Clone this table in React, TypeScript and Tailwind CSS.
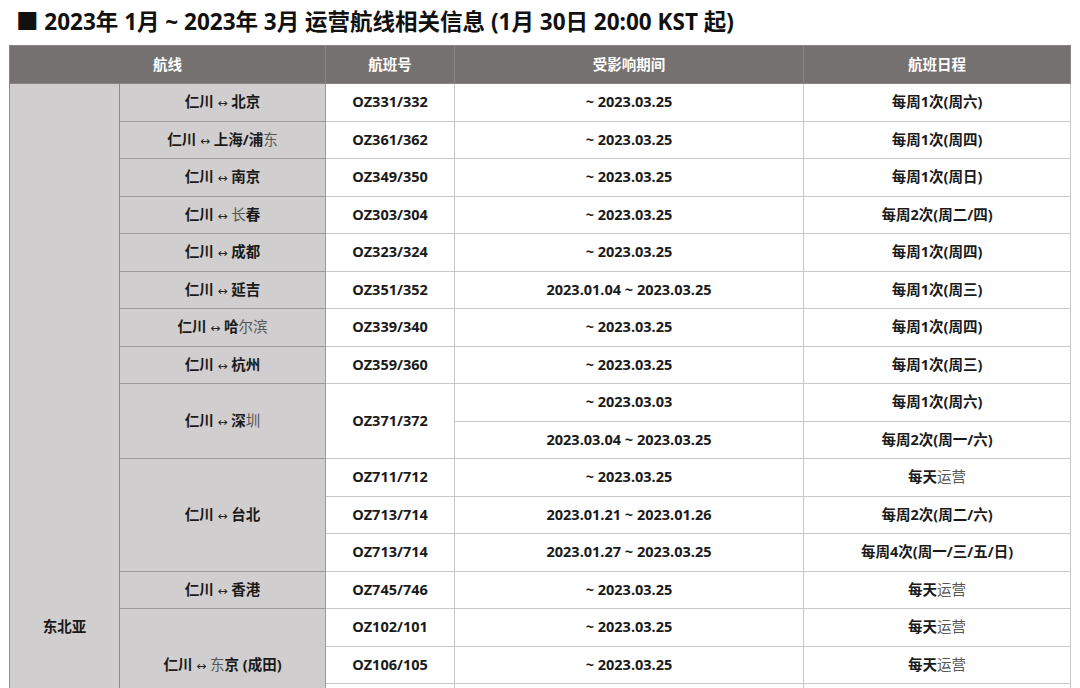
import React from 'react';

type Part = string | { light: string } | { arrow: true };

type Row = {
  route?: { parts: Part[]; span: number };
  flight?: { no: string; span: number };
  period: string;
  schedule: Part[];
};

const light = (s: string) => ({ light: s });
const arrow: Part = { arrow: true };
const daily: Part[] = ['每天', light('运营')];

const rows: Row[] = [
  { route: { parts: ['仁川 ', arrow, ' 北京'], span: 1 }, flight: { no: 'OZ331/332', span: 1 }, period: '~ 2023.03.25', schedule: ['每周1次(周六)'] },
  { route: { parts: ['仁川 ', arrow, ' 上海/浦', light('东')], span: 1 }, flight: { no: 'OZ361/362', span: 1 }, period: '~ 2023.03.25', schedule: ['每周1次(周四)'] },
  { route: { parts: ['仁川 ', arrow, ' 南京'], span: 1 }, flight: { no: 'OZ349/350', span: 1 }, period: '~ 2023.03.25', schedule: ['每周1次(周日)'] },
  { route: { parts: ['仁川 ', arrow, ' ', light('长'), '春'], span: 1 }, flight: { no: 'OZ303/304', span: 1 }, period: '~ 2023.03.25', schedule: ['每周2次(周二/四)'] },
  { route: { parts: ['仁川 ', arrow, ' 成都'], span: 1 }, flight: { no: 'OZ323/324', span: 1 }, period: '~ 2023.03.25', schedule: ['每周1次(周四)'] },
  { route: { parts: ['仁川 ', arrow, ' 延吉'], span: 1 }, flight: { no: 'OZ351/352', span: 1 }, period: '2023.01.04 ~ 2023.03.25', schedule: ['每周1次(周三)'] },
  { route: { parts: ['仁川 ', arrow, ' 哈', light('尔滨')], span: 1 }, flight: { no: 'OZ339/340', span: 1 }, period: '~ 2023.03.25', schedule: ['每周1次(周四)'] },
  { route: { parts: ['仁川 ', arrow, ' 杭州'], span: 1 }, flight: { no: 'OZ359/360', span: 1 }, period: '~ 2023.03.25', schedule: ['每周1次(周三)'] },
  { route: { parts: ['仁川 ', arrow, ' 深', light('圳')], span: 2 }, flight: { no: 'OZ371/372', span: 2 }, period: '~ 2023.03.03', schedule: ['每周1次(周六)'] },
  { period: '2023.03.04 ~ 2023.03.25', schedule: ['每周2次(周一/六)'] },
  { route: { parts: ['仁川 ', arrow, ' 台北'], span: 3 }, flight: { no: 'OZ711/712', span: 1 }, period: '~ 2023.03.25', schedule: daily },
  { flight: { no: 'OZ713/714', span: 1 }, period: '2023.01.21 ~ 2023.01.26', schedule: ['每周2次(周二/六)'] },
  { flight: { no: 'OZ713/714', span: 1 }, period: '2023.01.27 ~ 2023.03.25', schedule: ['每周4次(周一/三/五/日)'] },
  { route: { parts: ['仁川 ', arrow, ' 香港'], span: 1 }, flight: { no: 'OZ745/746', span: 1 }, period: '~ 2023.03.25', schedule: daily },
  { route: { parts: ['仁川 ', arrow, ' ', light('东'), '京 (成田)'], span: 3 }, flight: { no: 'OZ102/101', span: 1 }, period: '~ 2023.03.25', schedule: daily },
  { flight: { no: 'OZ106/105', span: 1 }, period: '~ 2023.03.25', schedule: daily },
  { flight: { no: 'OZ108/107', span: 1 }, period: '~ 2023.03.25', schedule: daily },
  { route: { parts: ['仁川 ', arrow, ' ', light('东'), '京 (羽田)'], span: 2 }, flight: { no: 'OZ1085/1065', span: 1 }, period: '~ 2023.03.25', schedule: daily },
  { flight: { no: 'OZ1035/1045', span: 1 }, period: '~ 2023.03.25', schedule: daily },
  { route: { parts: ['仁川 ', arrow, ' 大阪'], span: 3 }, flight: { no: 'OZ112/111', span: 1 }, period: '~ 2023.03.25', schedule: daily },
  { flight: { no: 'OZ114/113', span: 1 }, period: '~ 2023.03.25', schedule: daily },
  { flight: { no: 'OZ116/115', span: 1 }, period: '~ 2023.03.25', schedule: daily },
  { route: { parts: ['仁川 ', arrow, ' 名古屋'], span: 2 }, flight: { no: 'OZ122/121', span: 1 }, period: '~ 2023.03.25', schedule: daily },
  { flight: { no: 'OZ124/123', span: 1 }, period: '~ 2023.03.25', schedule: ['每周3次(周二/四/六)'] },
  { route: { parts: ['仁川 ', arrow, ' 福冈'], span: 2 }, flight: { no: 'OZ132/131', span: 1 }, period: '~ 2023.03.25', schedule: daily },
  { flight: { no: 'OZ134/133', span: 1 }, period: '~ 2023.03.25', schedule: daily },
  { route: { parts: ['仁川 ', arrow, ' 札幌'], span: 1 }, flight: { no: 'OZ174/173', span: 1 }, period: '~ 2023.03.25', schedule: daily },
  { route: { parts: ['仁川 ', arrow, ' 冲绳'], span: 1 }, flight: { no: 'OZ172/171', span: 1 }, period: '~ 2023.03.25', schedule: ['每周3次(周三/五/日)'] },
  { route: { parts: ['仁川 ', arrow, ' 乌兰巴托'], span: 1 }, flight: { no: 'OZ567/568', span: 1 }, period: '~ 2023.03.25', schedule: ['每周2次(周二/五)'] },
];

const Text: React.FC<{ parts: Part[] }> = ({ parts }) => (
  <>
    {parts.map((p, i) => {
      if (typeof p === 'string') return <span key={i}>{p}</span>;
      if ('arrow' in p)
        return (
          <span key={i} className="font-normal text-[12px] text-[#222]" style={{ fontFamily: '"DejaVu Sans", sans-serif' }}>
            ↔
          </span>
        );
      return (
        <span key={i} className="font-normal text-[#555]">
          {p.light}
        </span>
      );
    })}
  </>
);

export default function App() {
  return (
    <div
      className="h-[688px] overflow-hidden bg-white text-[#1a1a1a]"
      style={{ fontFamily: '"Open Sans", "Noto Sans CJK SC", sans-serif' }}
    >
      {/* Title */}
      <h1 className="pl-[16px] pt-[4px] h-[45px] text-[22.5px] font-bold leading-[36px] text-[#111]">
        ■ 2023年 1月 ~ 2023年 3月 运营航线相关信息 (1月 30日 20:00 KST 起)
      </h1>

      {/* Table */}
      <table className="ml-[9px] w-[1061px] table-fixed border-collapse text-[14.5px] font-bold">
        <colgroup>
          <col className="w-[110px]" />
          <col className="w-[206px]" />
          <col className="w-[129px]" />
          <col className="w-[349px]" />
          <col className="w-[267px]" />
        </colgroup>
        <thead>
          <tr className="h-[38px] bg-[#767171] text-white">
            <th colSpan={2} className="border border-[#8a8585] font-bold">航线</th>
            <th className="border border-[#8a8585] font-bold">航班号</th>
            <th className="border border-[#8a8585] font-bold">受影响期间</th>
            <th className="border border-[#8a8585] font-bold">航班日程</th>
          </tr>
        </thead>
        <tbody>
          {rows.map((row, i) => (
            <tr key={i} className="h-[37.5px]">
              {i === 0 && (
                <td
                  rowSpan={rows.length}
                  className="border border-[#8c8c8c] bg-[#d0cece] text-center align-middle"
                >
                  东北亚
                </td>
              )}
              {row.route && (
                <td
                  rowSpan={row.route.span}
                  className="border border-[#9a9a9a] bg-[#d0cece] text-center"
                >
                  <Text parts={row.route.parts} />
                </td>
              )}
              {row.flight && (
                <td
                  rowSpan={row.flight.span}
                  className="border border-[#c8c8c8] text-center"
                >
                  {row.flight.no}
                </td>
              )}
              <td className="border border-[#c8c8c8] text-center">{row.period}</td>
              <td className="border border-[#c8c8c8] text-center">
                <Text parts={row.schedule} />
              </td>
            </tr>
          ))}
        </tbody>
      </table>
    </div>
  );
}
